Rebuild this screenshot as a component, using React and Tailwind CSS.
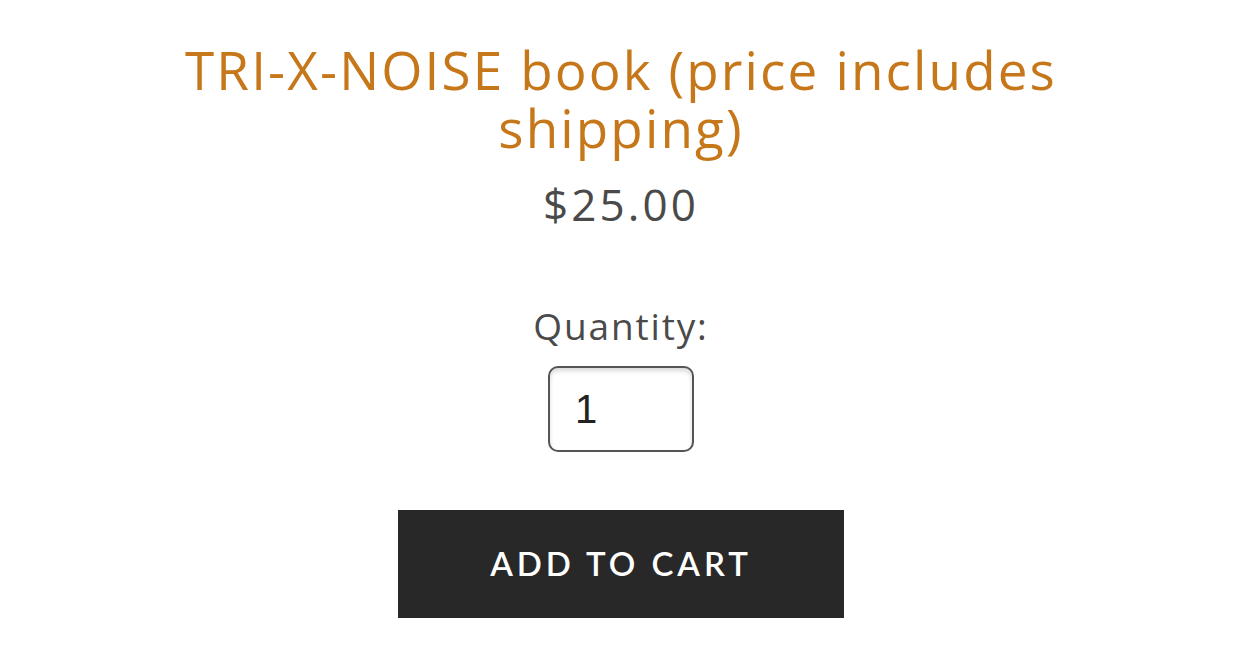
export default function App() {
  return (
    <main className="min-h-screen bg-white flex flex-col items-center pt-[41px] font-['Open_Sans','Noto_Sans',sans-serif]">
      <h1 className="text-[53px] leading-[58px] tracking-[0.04em] text-[#c6771a] text-center max-w-[920px]">
        TRI-X-NOISE book (price includes shipping)
      </h1>
      <p className="text-[44px] leading-[50px] tracking-[0.07em] text-[#4a4a4a] mt-[22px]">$25.00</p>

      <label className="text-[37px] leading-[44px] tracking-[0.05em] text-[#4a4a4a] mt-[75px]">Quantity:</label>
      <input
        type="text"
        defaultValue="1"
        className="mt-[18px] w-[146px] h-[86px] border-2 border-[#555] rounded-[10px] px-[25px] text-[40px] text-[#222] font-['Liberation_Sans',sans-serif] shadow-[inset_0_3px_4px_rgba(0,0,0,0.15)] focus:outline-none"
      />

      <button className="mt-[58px] w-[446px] h-[108px] bg-[#282828] text-white text-[33px] font-semibold tracking-[0.12em] uppercase font-['Lato','Open_Sans',sans-serif]">
        Add to cart
      </button>
    </main>
  );
}
